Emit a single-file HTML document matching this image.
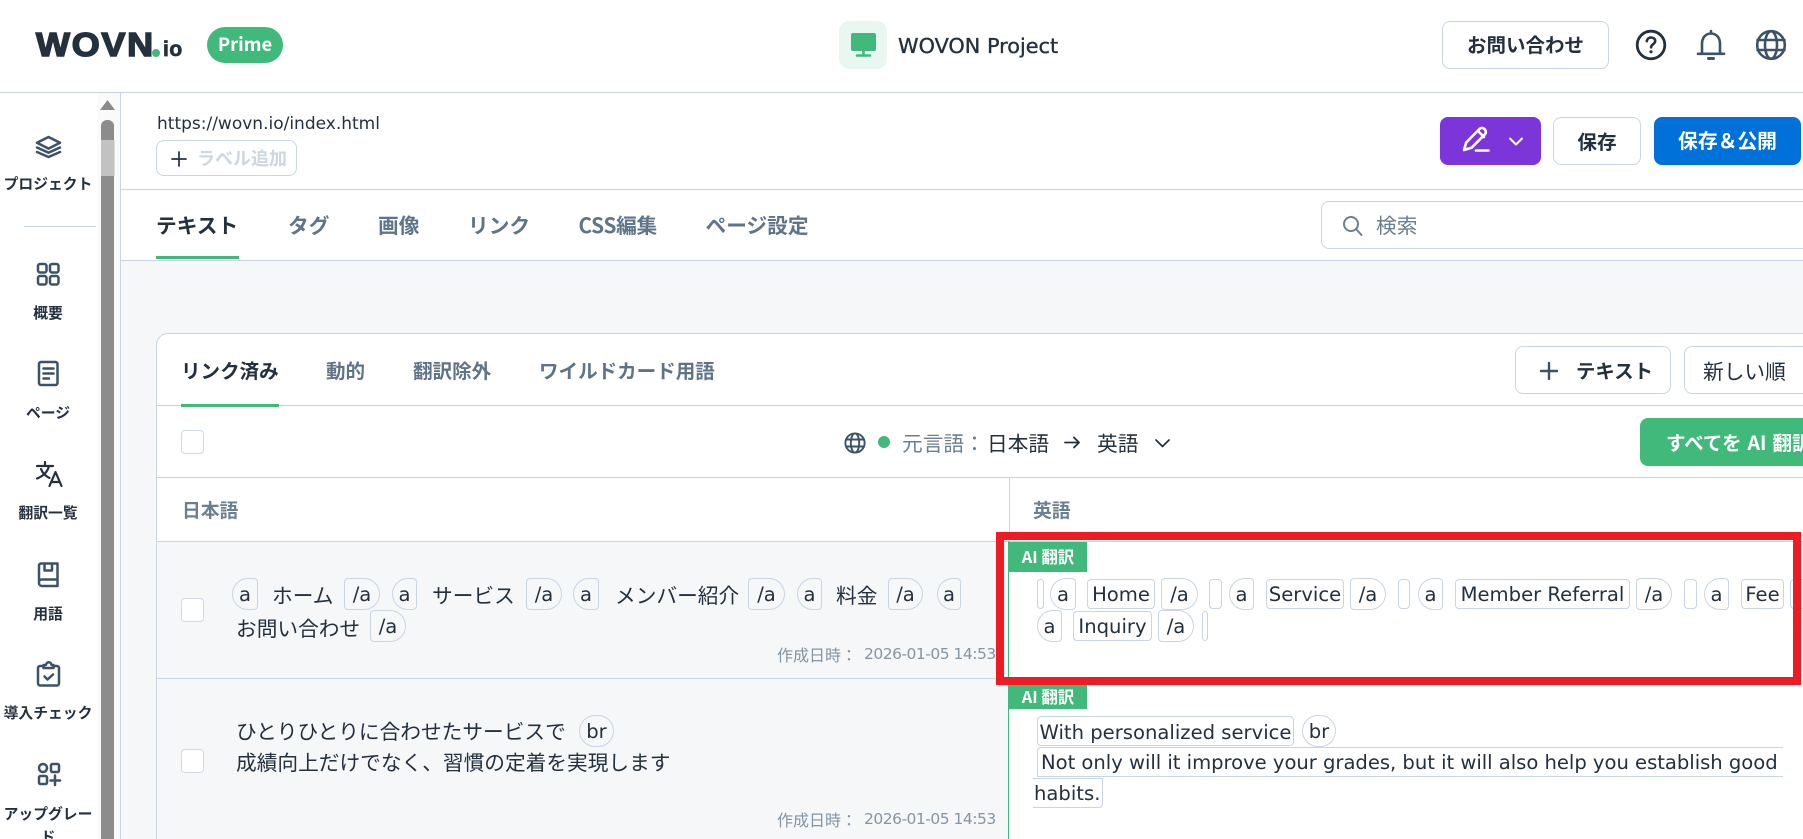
<!DOCTYPE html>
<html lang="ja"><head><meta charset="utf-8"><title>WOVN.io</title>
<style>
html,body{margin:0;padding:0;width:1803px;height:839px;overflow:hidden;background:#fff}
body{position:relative;font-family:"Noto Sans CJK JP","Liberation Sans",sans-serif;color:#24303e}
.b{position:absolute;box-sizing:border-box}
.t{position:absolute;white-space:nowrap;line-height:30px;height:30px}
.l{font-family:"DejaVu Sans","Noto Sans CJK JP",sans-serif}
.n{font-size:14.8px;font-weight:700;text-align:center;left:0;width:96px;color:#24303e}
.tab{font-size:20.7px;font-weight:700;color:#5f7488}
.tab2{font-size:19.55px;font-weight:700;color:#5f7488}
.j{font-size:20.7px;color:#24303e}
.c{position:absolute;box-sizing:border-box;border:1px solid #c9d5e2;height:30px;line-height:30px;border-radius:4px;font-family:"DejaVu Sans","Noto Sans CJK JP",sans-serif;font-size:19.6px;color:#24303e;text-align:center;white-space:nowrap}
.a{height:32px;line-height:32px;border-radius:16px 4px 4px 16px;}
.e{height:32px;line-height:32px;border-radius:4px 16px 16px 4px;}
.d{height:32px;line-height:32px;border-radius:16px}
.bx{background:#fff;border:1px solid #d0dae5;border-radius:4px;width:23px;height:24px}
.time{font-size:16px;color:#8495a5}
.ai{position:absolute;left:1009px;width:78px;background:#41b97b;color:#fff;font-weight:700;font-size:16.4px;text-align:center}
</style></head><body>

<!-- page backgrounds -->
<div class="b" style="left:120px;top:260px;width:1683px;height:579px;background:#f5f7f9"></div>
<div class="b" style="left:0;top:92px;width:1803px;height:1px;background:#c9d5e2"></div>
<div class="b" style="left:120px;top:92px;width:1px;height:747px;background:#c9d5e2"></div>
<div class="b" style="left:120px;top:189px;width:1683px;height:1px;background:#c9d5e2"></div>
<div class="b" style="left:120px;top:260px;width:1683px;height:1px;background:#c9d5e2"></div>

<!-- header -->
<div class="t" style="left:36px;top:30px;height:30px;font-family:'Liberation Sans',sans-serif;font-weight:700;font-size:33px;line-height:30px;letter-spacing:1.6px;color:#24303e;-webkit-text-stroke:1.5px #24303e;transform:scaleX(1.09);transform-origin:0 50%">WOVN</div>
<div class="b" style="left:152px;top:48.500px;width:8px;height:8px;border-radius:50%;background:#41b97b"></div>
<div class="t" style="left:163px;top:35px;font-family:'Liberation Sans',sans-serif;font-weight:700;font-size:21px;line-height:30px;letter-spacing:.5px;color:#24303e;-webkit-text-stroke:.7px #24303e">io</div>
<div class="b" style="left:207px;top:27px;width:76px;height:36px;border-radius:18px;background:#41b97b;color:#fff;font-weight:700;font-size:18.4px;line-height:35px;text-align:center">Prime</div>

<div class="b" style="left:839px;top:21px;width:48px;height:48px;border-radius:10px;background:#eaf7f1"></div>
<div class="t l" style="left:898px;top:31px;font-size:20.800px;-webkit-text-stroke:.35px #24303e">WOVON Project</div>
<div class="b" style="left:1442px;top:21px;width:167px;height:48px;border:1px solid #c9d5e2;border-radius:8px;text-align:center;font-size:19.5px;font-weight:700;line-height:44px;background:#fff">お問い合わせ</div>

<!-- toolbar -->
<div class="t l" style="left:157px;top:109px;font-size:17px">https://wovn.io/index.html</div>
<div class="b" style="left:156px;top:140px;width:141px;height:36px;border:1px solid #c9d5e2;border-radius:8px"></div>
<div class="t" style="left:197px;top:143px;font-size:18px;font-weight:700;color:#cdd7e2">ラベル追加</div>

<div class="b" style="left:1440px;top:117px;width:101px;height:48px;border-radius:8px;background:#7b35d9"></div>
<div class="b" style="left:1553px;top:117px;width:88px;height:48px;border:1px solid #c9d5e2;border-radius:8px;text-align:center;font-size:19.6px;font-weight:700;line-height:46px">保存</div>
<div class="b" style="left:1654px;top:117px;width:147px;height:48px;border-radius:8px;background:#0071d9;color:#fff;text-align:center;font-size:19.8px;font-weight:700;line-height:46px">保存＆公開</div>

<!-- tabs -->
<div class="t tab" style="left:156px;top:209px;color:#24303e">テキスト</div>
<div class="b" style="left:156px;top:256px;width:83px;height:3px;background:#41b97b"></div>
<div class="t tab" style="left:288px;top:209px">タグ</div>
<div class="t tab" style="left:378px;top:209px">画像</div>
<div class="t tab" style="left:468px;top:209px">リンク</div>
<div class="t tab" style="left:578.500px;top:209px;letter-spacing:-.25px">CSS編集</div>
<div class="t tab" style="left:705.500px;top:209px">ページ設定</div>

<div class="b" style="left:1321px;top:201px;width:490px;height:48px;border:1px solid #c9d5e2;border-radius:8px;background:#fff"></div>
<div class="t" style="left:1376px;top:209px;font-size:20.7px;color:#6a7f92">検索</div>

<!-- card -->
<div class="b" style="left:156px;top:333px;width:1660px;height:520px;background:#fff;border:1px solid #c9d5e2;border-radius:12px"></div>
<div class="t tab2" style="left:181px;top:355px;color:#24303e">リンク済み</div>
<div class="b" style="left:181px;top:404px;width:98px;height:3px;background:#41b97b;z-index:2"></div>
<div class="t tab2" style="left:326px;top:355px">動的</div>
<div class="t tab2" style="left:413px;top:355px">翻訳除外</div>
<div class="t tab2" style="left:539px;top:355px">ワイルドカード用語</div>
<div class="b" style="left:157px;top:405px;width:1646px;height:1px;background:#c9d5e2"></div>

<div class="b" style="left:1515px;top:346px;width:156px;height:48px;border:1px solid #c9d5e2;border-radius:8px"></div>
<div class="t" style="left:1576px;top:355px;font-size:19.4px;font-weight:700">テキスト</div>
<div class="b" style="left:1684px;top:346px;width:140px;height:48px;border:1px solid #c9d5e2;border-radius:8px"></div>
<div class="t" style="left:1703px;top:355px;font-size:20.7px">新しい順</div>

<div class="b bx" style="left:181px;top:430px"></div>
<div class="b" style="left:878px;top:436px;width:12px;height:12px;border-radius:50%;background:#41b97b"></div>
<div class="t" style="left:902px;top:427px;font-size:20.7px;color:#6a7f92">元言語：</div>
<div class="t" style="left:987px;top:427px;font-size:20.7px">日本語</div>
<div class="t" style="left:1097px;top:427px;font-size:20.7px">英語</div>
<div class="b" style="left:1640px;top:418px;width:180px;height:48px;border-radius:8px;background:#41b97b"></div>
<div class="t" style="left:1666px;top:427px;font-size:19.55px;font-weight:700;color:#fff;width:137px;overflow:hidden;word-spacing:1.500px">すべてを AI 翻訳</div>
<div class="b" style="left:157px;top:477px;width:1646px;height:1px;background:#c9d5e2"></div>

<!-- table head -->
<div class="b" style="left:1009px;top:477px;width:1px;height:64px;background:#c9d5e2"></div>
<div class="t" style="left:182px;top:495px;font-size:18.800px;font-weight:700;color:#6b7f92">日本語</div>
<div class="t" style="left:1033px;top:495px;font-size:18.800px;font-weight:700;color:#6b7f92">英語</div>
<div class="b" style="left:157px;top:541px;width:1646px;height:1px;background:#c9d5e2"></div>

<!-- left column rows -->
<div class="b" style="left:157px;top:542px;width:851px;height:297px;background:#f5f7f9"></div>
<div class="b" style="left:157px;top:678px;width:851px;height:1px;background:#c9d5e2"></div>
<div class="b" style="left:1008px;top:541px;width:1px;height:298px;background:#41b97b"></div>

<div class="b bx" style="left:181px;top:598px"></div>
<div class="c a" style="left:232px;top:578px;width:26px">a</div>
<div class="t j" style="left:272px;top:579px">ホーム</div>
<div class="c e" style="left:344px;top:578px;width:36px">/a</div>
<div class="c a" style="left:392px;top:578px;width:25px">a</div>
<div class="t j" style="left:432px;top:579px">サービス</div>
<div class="c e" style="left:526px;top:578px;width:36px">/a</div>
<div class="c a" style="left:573px;top:578px;width:26px">a</div>
<div class="t j" style="left:615px;top:579px">メンバー紹介</div>
<div class="c e" style="left:748px;top:578px;width:37px">/a</div>
<div class="c a" style="left:797px;top:578px;width:25px">a</div>
<div class="t j" style="left:836px;top:579px">料金</div>
<div class="c e" style="left:888px;top:578px;width:35px">/a</div>
<div class="c a" style="left:937px;top:578px;width:24px">a</div>
<div class="t j" style="left:236px;top:612px">お問い合わせ</div>
<div class="c e" style="left:370px;top:610px;width:36px">/a</div>
<div class="t time" style="left:777px;top:639px">作成日時：</div>
<div class="t l time" style="left:864px;top:639px;font-size:15.5px;letter-spacing:-.5px">2026-01-05 14:53</div>

<div class="b bx" style="left:181px;top:749px"></div>
<div class="t j" style="left:236px;top:715px">ひとりひとりに合わせたサービスで</div>
<div class="c d" style="left:579px;top:715px;width:35px">br</div>
<div class="t j" style="left:236px;top:746px">成績向上だけでなく、習慣の定着を実現します</div>
<div class="t time" style="left:777px;top:804px">作成日時：</div>
<div class="t l time" style="left:864px;top:804px;font-size:15.5px;letter-spacing:-.5px">2026-01-05 14:53</div>

<!-- right column -->
<div class="ai" style="top:542px;height:30px;line-height:28px">AI 翻訳</div>
<div class="c" style="left:1037px;top:579px;width:7px"></div>
<div class="c a" style="left:1050px;top:578px;width:26px">a</div>
<div class="c" style="left:1087px;top:579px;width:68px">Home</div>
<div class="c e" style="left:1161px;top:578px;width:37px">/a</div>
<div class="c" style="left:1209px;top:579px;width:13px"></div>
<div class="c a" style="left:1229px;top:578px;width:25px">a</div>
<div class="c" style="left:1266px;top:579px;width:78px">Service</div>
<div class="c e" style="left:1350px;top:578px;width:36px">/a</div>
<div class="c" style="left:1398px;top:579px;width:12px"></div>
<div class="c a" style="left:1418px;top:578px;width:25px">a</div>
<div class="c" style="left:1455px;top:579px;width:175px">Member Referral</div>
<div class="c e" style="left:1636px;top:578px;width:36px">/a</div>
<div class="c" style="left:1684px;top:579px;width:13px"></div>
<div class="c a" style="left:1704px;top:578px;width:25px">a</div>
<div class="c" style="left:1741px;top:579px;width:43px">Fee</div>
<div class="c" style="left:1790px;top:579px;width:20px;border-right:0"></div>
<div class="c a" style="left:1037px;top:610px;width:25px">a</div>
<div class="c" style="left:1073px;top:611px;width:79px">Inquiry</div>
<div class="c e" style="left:1158px;top:610px;width:36px">/a</div>
<div class="c" style="left:1202px;top:611px;width:6px"></div>

<div class="ai" style="top:679px;height:30px;line-height:34px">AI 翻訳</div>
<div class="c" style="left:1037px;top:716px;width:257px;line-height:31px">With personalized service</div>
<div class="c d" style="left:1302px;top:715px;width:34px">br</div>
<div class="c" style="left:1037px;top:747px;width:746px;border-right:0;border-radius:4px 0 0 0;text-align:left;padding-left:3px;letter-spacing:-.03px">Not only will it improve your grades, but it will also help you establish good</div>
<div class="c" style="left:1033px;top:778px;width:70px;border-left:0;border-radius:0 0 4px 0;text-align:left;padding-left:1px">habits.</div>

<!-- sidebar -->
<div class="b" style="left:0;top:93px;width:120px;height:746px;background:#fff"></div>
<div class="b" style="left:97px;top:93px;width:23px;height:746px;background:#fafafa"></div>
<div class="b" style="left:101px;top:120px;width:13px;height:719px;background:#8c8c8c;border-radius:6px 6px 0 0"></div>
<div class="b" style="left:101px;top:140px;width:19px;height:36px;background:linear-gradient(90deg,#c2c2c2 0,#c2c2c2 70%,#fafafa 70%)"></div>
<div class="b" style="left:120px;top:93px;width:1px;height:746px;background:#c9d5e2"></div>
<div class="b" style="left:24px;top:226px;width:72px;height:1px;background:#c9d5e2"></div>
<div class="t n" style="top:168.500px">プロジェクト</div>
<div class="t n" style="top:298px">概要</div>
<div class="t n" style="top:398px">ページ</div>
<div class="t n" style="top:498px">翻訳一覧</div>
<div class="t n" style="top:599px">用語</div>
<div class="t n" style="top:698px">導入チェック</div>
<div class="t n" style="top:799px">アップグレー</div>
<div class="t n" style="top:822px">ド</div>

<!-- icons -->
<svg width="1803" height="839" viewBox="0 0 1803 839" style="position:absolute;left:0;top:0" fill="none" stroke-linecap="round" stroke-linejoin="round">
  <polygon points="100,110 115,110 107.5,100" fill="#8a8a8a"/>
  <!-- monitor -->
  <rect x="851" y="33" width="25" height="18" rx="2" fill="#41b97b"/>
  <path d="M863.5 51v4M857 55.5h13" stroke="#41b97b" stroke-width="2.6"/>
  <!-- question -->
  <circle cx="1651" cy="45" r="13.8" stroke="#24303e" stroke-width="2.8"/>
  <path d="M1646.8 41.2c.3-2.4 2.1-3.7 4.3-3.7 2.4 0 4.1 1.5 4.1 3.6 0 3-4.1 3.2-4.1 6.2" stroke="#24303e" stroke-width="2.6"/>
  <circle cx="1651" cy="51.8" r="1.6" fill="#24303e"/>
  <!-- bell -->
  <path d="M1711 31v2.2M1702 53V43.5c0-5.6 3.6-10 9-10s9 4.4 9 10V53M1698 53.8h26" stroke="#3d5268" stroke-width="2.6"/>
  <path d="M1708.5 58.5h5" stroke="#3d5268" stroke-width="3"/>
  <!-- globe top -->
  <g stroke="#3d5268" stroke-width="2.6"><circle cx="1771" cy="45" r="13.8"/><path d="M1757.5 40h27M1757.5 50h27"/><ellipse cx="1771" cy="45" rx="6" ry="13.8"/></g>
  <!-- plus label -->
  <path d="M179 152v14M172 159h14" stroke="#24303e" stroke-width="1.7"/>
  <!-- pen -->
  <g stroke="#fff" stroke-width="2.6"><path d="M1464 150l2.2-7.5 13.4-13.6c1.3-1.3 3.4-1.3 4.7 0l.6.7c1.3 1.3 1.3 3.4 0 4.7l-13.4 13.5z"/><path d="M1478 131l6 6M1476 150.5h12.5"/></g>
  <path d="M1510 138.5l6 6 6-6" stroke="#fff" stroke-width="2"/>
  <!-- search -->
  <circle cx="1351" cy="224" r="7" stroke="#6a7f92" stroke-width="2"/><path d="M1356 229l5.5 6" stroke="#6a7f92" stroke-width="2"/>
  <!-- plus text button -->
  <path d="M1549 363v16M1541 371h16" stroke="#3d5268" stroke-width="2.4"/>
  <!-- small globe -->
  <g stroke="#3d5268" stroke-width="1.9"><circle cx="855" cy="443" r="9.6"/><path d="M846 439.5h18M846 446.5h18"/><ellipse cx="855" cy="443" rx="4.2" ry="9.6"/></g>
  <!-- arrow -->
  <path d="M1065 442.500h14M1074 437.500l5 5-5 5" stroke="#24303e" stroke-width="1.8"/>
  <path d="M1156 440l6.500 6.500 6.500-6.500" stroke="#24303e" stroke-width="1.700"/>
  <!-- sidebar icons -->
  <g stroke="#3d5268" stroke-width="2.5">
    <path d="M48.500 137l11.500 5.800-11.500 5.800-11.500-5.800z"/>
    <path d="M37 147.500l11.500 5.200 11.500-5.200M37 152l11.500 5 11.500-5"/>
    <rect x="38" y="264" width="8.500" height="8.500" rx="2"/><rect x="50" y="264" width="8.500" height="8.500" rx="2"/>
    <rect x="38" y="276" width="8.500" height="8.500" rx="2"/><rect x="50" y="276" width="8.500" height="8.500" rx="2"/>
    <rect x="39" y="362" width="18.500" height="23" rx="2"/><path d="M43.500 368.500h10M43.500 373.500h10M43.500 378.500h5.500"/>
    <path d="M39 582V565.500a2 2 0 0 1 2-2h16.500V586H42a3 3 0 0 1-3-3v-1a2.500 2.500 0 0 1 2.500-2.500h16M44.500 564v6.500h7.500v-6.500"/>
    <path d="M43.500 666H40a2 2 0 0 0-2 2v15.500a2 2 0 0 0 2 2h17a2 2 0 0 0 2-2V668a2 2 0 0 0-2-2h-3.500M43.500 668v-3h2.500c.5-3.600 5-3.600 5.500 0h2v3z"/>
    <path d="M44.500 676.500l3 3 5.500-5"/>
    <circle cx="43" cy="768" r="4"/><rect x="51" y="764" width="8" height="8" rx="1.500"/><rect x="39" y="776" width="8" height="8" rx="1.500"/><path d="M55 775.500v9.500M50.500 780.500h9.500"/>
  </g>
  <g stroke="#24303e" stroke-width="2.200">
    <path d="M37 466h16M45 462v4M49 466c-1.500 6-5.500 10-12 12.500M41 469c1.500 4 4.500 7 8.500 9"/>
    <path d="M49.500 486l6-14 6 14M51.500 482h8"/>
  </g>
</svg>

<!-- red highlight -->
<div class="b" style="left:996px;top:532px;width:805px;height:153px;border:8px solid #ed1c24;z-index:5"></div>
</body></html>
